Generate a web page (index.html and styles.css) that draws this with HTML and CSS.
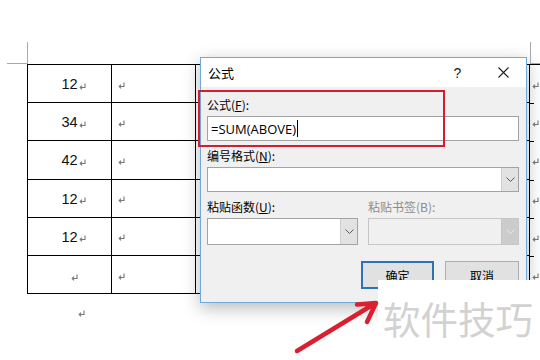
FILE: index.html
```html
<!DOCTYPE html>
<html lang="zh">
<head>
<meta charset="utf-8">
<title>公式</title>
<link rel="stylesheet" href="styles.css">
</head>
<body>
<div class="page">
  <div class="doc">
    <div class="grid">
      <div class="cell num">12<svg class="pm tail" viewBox="0 0 7 7"><path d="M6 0.5V4.5H1.2M3 2.7L1.2 4.5L3 6.3"/></svg></div>
      <div class="cell left"><svg class="pm" viewBox="0 0 7 7"><path d="M6 0.5V4.5H1.2M3 2.7L1.2 4.5L3 6.3"/></svg></div>
      <div class="cell"></div>
      <div class="cell edge"><svg class="pm" viewBox="0 0 7 7"><path d="M6 0.5V4.5H1.2M3 2.7L1.2 4.5L3 6.3"/></svg></div>

      <div class="cell num">34<svg class="pm tail" viewBox="0 0 7 7"><path d="M6 0.5V4.5H1.2M3 2.7L1.2 4.5L3 6.3"/></svg></div>
      <div class="cell left"><svg class="pm" viewBox="0 0 7 7"><path d="M6 0.5V4.5H1.2M3 2.7L1.2 4.5L3 6.3"/></svg></div>
      <div class="cell"></div>
      <div class="cell edge"><svg class="pm" viewBox="0 0 7 7"><path d="M6 0.5V4.5H1.2M3 2.7L1.2 4.5L3 6.3"/></svg></div>

      <div class="cell num">42<svg class="pm tail" viewBox="0 0 7 7"><path d="M6 0.5V4.5H1.2M3 2.7L1.2 4.5L3 6.3"/></svg></div>
      <div class="cell left"><svg class="pm" viewBox="0 0 7 7"><path d="M6 0.5V4.5H1.2M3 2.7L1.2 4.5L3 6.3"/></svg></div>
      <div class="cell"></div>
      <div class="cell edge"><svg class="pm" viewBox="0 0 7 7"><path d="M6 0.5V4.5H1.2M3 2.7L1.2 4.5L3 6.3"/></svg></div>

      <div class="cell num">12<svg class="pm tail" viewBox="0 0 7 7"><path d="M6 0.5V4.5H1.2M3 2.7L1.2 4.5L3 6.3"/></svg></div>
      <div class="cell left"><svg class="pm" viewBox="0 0 7 7"><path d="M6 0.5V4.5H1.2M3 2.7L1.2 4.5L3 6.3"/></svg></div>
      <div class="cell"></div>
      <div class="cell edge"><svg class="pm" viewBox="0 0 7 7"><path d="M6 0.5V4.5H1.2M3 2.7L1.2 4.5L3 6.3"/></svg></div>

      <div class="cell num">12<svg class="pm tail" viewBox="0 0 7 7"><path d="M6 0.5V4.5H1.2M3 2.7L1.2 4.5L3 6.3"/></svg></div>
      <div class="cell left"><svg class="pm" viewBox="0 0 7 7"><path d="M6 0.5V4.5H1.2M3 2.7L1.2 4.5L3 6.3"/></svg></div>
      <div class="cell"></div>
      <div class="cell edge"><svg class="pm" viewBox="0 0 7 7"><path d="M6 0.5V4.5H1.2M3 2.7L1.2 4.5L3 6.3"/></svg></div>

      <div class="cell num"><svg class="pm tail" viewBox="0 0 7 7"><path d="M6 0.5V4.5H1.2M3 2.7L1.2 4.5L3 6.3"/></svg></div>
      <div class="cell left"><svg class="pm" viewBox="0 0 7 7"><path d="M6 0.5V4.5H1.2M3 2.7L1.2 4.5L3 6.3"/></svg></div>
      <div class="cell"></div>
      <div class="cell edge"><svg class="pm" viewBox="0 0 7 7"><path d="M6 0.5V4.5H1.2M3 2.7L1.2 4.5L3 6.3"/></svg></div>
    </div>
    <div class="after"><svg class="pm" viewBox="0 0 7 7"><path d="M6 0.5V4.5H1.2M3 2.7L1.2 4.5L3 6.3"/></svg></div>
  </div>

  <div class="dialog">
    <div class="titlebar">
      <span class="title">公式</span>
      <span class="tbtn help">?</span>
      <span class="tbtn close"><svg viewBox="0 0 11 11" width="11" height="11"><path d="M0.5 0.5L10.5 10.5M10.5 0.5L0.5 10.5"/></svg></span>
    </div>
    <div class="body">
      <div class="label">公式(<u>F</u>):</div>
      <div class="field text"><span class="value">=SUM(ABOVE)</span><span class="caret"></span></div>
      <div class="label gap">编号格式(<u>N</u>):</div>
      <div class="field combo">
        <span class="combo-text"></span>
        <span class="combo-btn"><svg viewBox="0 0 9 5" width="9" height="5"><path d="M0.5 0.5L4.5 4.5L8.5 0.5"/></svg></span>
      </div>
      <div class="pair gap">
        <div class="col">
          <div class="label">粘贴函数(<u>U</u>):</div>
          <div class="field combo tall">
            <span class="combo-text"></span>
            <span class="combo-btn"><svg viewBox="0 0 9 5" width="9" height="5"><path d="M0.5 0.5L4.5 4.5L8.5 0.5"/></svg></span>
          </div>
        </div>
        <div class="col">
          <div class="label disabled">粘贴书签(B):</div>
          <div class="field combo tall off">
            <span class="combo-text"></span>
            <span class="combo-btn"><svg viewBox="0 0 9 5" width="9" height="5"><path d="M0.5 0.5L4.5 4.5L8.5 0.5"/></svg></span>
          </div>
        </div>
      </div>
      <div class="buttons">
        <span class="btn primary">确定</span>
        <span class="btn">取消</span>
      </div>
    </div>
  </div>

  <div class="highlight"></div>
  <div class="watermark">软件技巧</div>
  <svg class="arrow" viewBox="0 0 540 360" width="540" height="360">
    <path d="M297 351L374 304M357 304.5L376 303L367 322"/>
  </svg>
</div>
</body>
</html>
```

FILE: styles.css
```css
html, body {
  margin: 0;
  padding: 0;
  background: #fff;
}

.page {
  position: relative;
  width: 540px;
  height: 360px;
  overflow: hidden;
  box-sizing: border-box;
  padding: 64px 0 0 27px;
  background: #fff;
  font-family: "Liberation Sans", Arial, sans-serif;
}

.page::before {
  content: "";
  position: absolute;
  left: 7px;
  top: 42px;
  width: 20px;
  height: 21px;
  border-right: 1px solid #a8a8a8;
  border-bottom: 1px solid #a8a8a8;
}

.page::after {
  content: "";
  position: absolute;
  left: 530px;
  top: 42px;
  width: 10px;
  height: 21px;
  border-left: 1px solid #a8a8a8;
  border-bottom: 1px solid #a8a8a8;
}

.grid {
  display: grid;
  grid-template-columns: 84px 84px 334px 20px;
  grid-template-rows: repeat(6, 38.2px);
  border-top: 1px solid #000;
  border-left: 1px solid #000;
  width: max-content;
}

.cell {
  box-sizing: border-box;
  border-right: 1px solid #000;
  border-bottom: 1px solid #000;
  display: flex;
  align-items: center;
  font-size: 14.5px;
  color: #111;
}

.cell.num {
  justify-content: center;
  padding-top: 1px;
}

.cell.left {
  padding-left: 6px;
}

.cell.edge {
  border-right: none;
  border-bottom: none;
  position: relative;
  padding-left: 2px;
}

.cell.edge::after {
  content: "";
  position: absolute;
  left: 0;
  bottom: -1px;
  width: 4px;
  border-bottom: 1px solid #000;
}

.pm {
  width: 7px;
  height: 7px;
  fill: none;
  stroke: #777;
  stroke-width: 1.1;
  flex: none;
  margin-top: 3px;
}

.pm.tail {
  margin-left: 1px;
  margin-right: -8px;
  margin-top: 4px;
}

.after {
  padding: 16px 0 0 51px;
  display: flex;
}

.after .pm {
  margin-top: 0;
}

/* dialog */
.dialog {
  position: absolute;
  left: 200px;
  top: 57px;
  width: 327px;
  height: 246px;
  box-sizing: border-box;
  border: 1px solid #6ea9dc;
  background: #f0f0f0;
  box-shadow: 0 5px 16px rgba(0, 0, 0, 0.28);
  display: flex;
  flex-direction: column;
  font-family: "Noto Sans CJK SC", "Liberation Sans", sans-serif;
  color: #000;
}

.titlebar {
  height: 29px;
  background: #fff;
  display: flex;
  align-items: center;
  padding-left: 7px;
  font-size: 13px;
}

.title {
  flex: 1;
}

.tbtn {
  width: 45px;
  height: 29px;
  display: flex;
  align-items: center;
  justify-content: center;
}

.tbtn.close {
  width: 46px;
}

.help {
  font-family: "Liberation Sans", sans-serif;
  font-size: 14px;
  color: #222;
}

.close svg {
  fill: none;
  stroke: #222;
  stroke-width: 1.1;
}

.body {
  padding: 9px 7px 0 6px;
  display: flex;
  flex-direction: column;
}

.label {
  font-size: 12px;
  line-height: 17px;
  height: 17px;
  margin-bottom: 3px;
}

.label.gap,
.pair.gap {
  margin-top: 6px;
}

.label.disabled {
  color: #8d8d8d;
}

.field {
  box-sizing: border-box;
  height: 25px;
  border: 1px solid #a3a3a3;
  background: #fff;
  display: flex;
  align-items: center;
}

.field.text {
  padding-left: 3px;
  font-family: "Open Sans", sans-serif;
  font-size: 13px;
}

.caret {
  width: 1px;
  height: 17px;
  background: #000;
  margin-left: 1px;
}

.combo-text {
  flex: 1;
}

.combo-btn {
  box-sizing: border-box;
  width: 17px;
  height: 100%;
  background: #e2e2e2;
  border-left: 1px solid #cfcfcf;
  display: flex;
  align-items: center;
  justify-content: center;
}

.combo-btn svg {
  fill: none;
  stroke: #5a5a5a;
  stroke-width: 1;
}

.field.tall {
  height: 27px;
}

.field.off {
  background: #f0f0f0;
  border-color: #c6c6c6;
}

.field.off .combo-btn {
  background: #cccccc;
  border-left-color: #c6c6c6;
}

.field.off .combo-btn svg {
  stroke: #e8e8e8;
}

.pair {
  display: grid;
  grid-template-columns: 151px 151px;
  column-gap: 10px;
}

.buttons {
  margin-top: 16px;
  display: flex;
  justify-content: flex-end;
  gap: 11px;
}

.btn {
  box-sizing: border-box;
  width: 74px;
  height: 28px;
  background: #e1e1e1;
  border: 1px solid #adadad;
  display: flex;
  align-items: center;
  justify-content: center;
  font-size: 12px;
}

.btn.primary {
  width: 73px;
  border: 2px solid #2b72b6;
}

.highlight {
  position: absolute;
  left: 198px;
  top: 90px;
  width: 247px;
  height: 57px;
  box-sizing: border-box;
  border: 2px solid #d21f30;
}

.watermark {
  position: absolute;
  left: 378px;
  top: 280px;
  right: 0;
  bottom: 0;
  background: #fff;
  box-sizing: border-box;
  padding: 19px 0 0 5px;
  font-family: "Noto Sans CJK SC", sans-serif;
  font-size: 37.5px;
  line-height: 1;
  color: #d2d2d2;
  white-space: nowrap;
}

.arrow {
  position: absolute;
  left: 0;
  top: 0;
  fill: none;
  stroke: #d91f30;
  stroke-width: 4.5;
  stroke-linecap: round;
  stroke-linejoin: round;
  pointer-events: none;
}
```
